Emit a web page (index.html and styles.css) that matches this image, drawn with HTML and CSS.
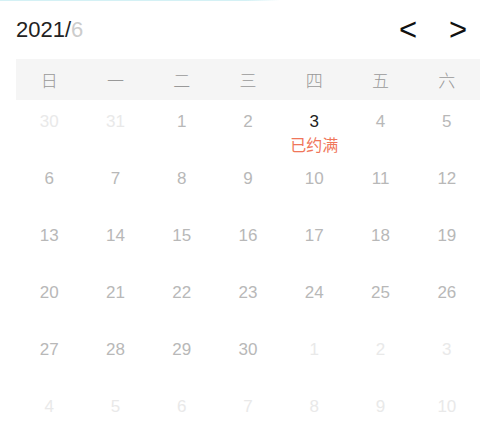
FILE: index.html
```html
<!DOCTYPE html>
<html lang="zh">
<head>
<meta charset="utf-8">
<link rel="stylesheet" href="styles.css">
</head>
<body>
<div class="topline"></div>
<div class="cal">
  <div class="head">
    <div class="title">2021/<span class="month">6</span></div>
    <div class="nav"><span class="arrow">&lt;</span><span class="arrow">&gt;</span></div>
  </div>
  <div class="week">
    <span>日</span><span>一</span><span>二</span><span>三</span><span>四</span><span>五</span><span>六</span>
  </div>
  <div class="days">
    <div class="day other"><span class="num">30</span></div>
    <div class="day other"><span class="num">31</span></div>
    <div class="day"><span class="num">1</span></div>
    <div class="day"><span class="num">2</span></div>
    <div class="day sel"><span class="num">3</span><span class="tag">已约满</span></div>
    <div class="day"><span class="num">4</span></div>
    <div class="day"><span class="num">5</span></div>
    <div class="day"><span class="num">6</span></div>
    <div class="day"><span class="num">7</span></div>
    <div class="day"><span class="num">8</span></div>
    <div class="day"><span class="num">9</span></div>
    <div class="day"><span class="num">10</span></div>
    <div class="day"><span class="num">11</span></div>
    <div class="day"><span class="num">12</span></div>
    <div class="day"><span class="num">13</span></div>
    <div class="day"><span class="num">14</span></div>
    <div class="day"><span class="num">15</span></div>
    <div class="day"><span class="num">16</span></div>
    <div class="day"><span class="num">17</span></div>
    <div class="day"><span class="num">18</span></div>
    <div class="day"><span class="num">19</span></div>
    <div class="day"><span class="num">20</span></div>
    <div class="day"><span class="num">21</span></div>
    <div class="day"><span class="num">22</span></div>
    <div class="day"><span class="num">23</span></div>
    <div class="day"><span class="num">24</span></div>
    <div class="day"><span class="num">25</span></div>
    <div class="day"><span class="num">26</span></div>
    <div class="day"><span class="num">27</span></div>
    <div class="day"><span class="num">28</span></div>
    <div class="day"><span class="num">29</span></div>
    <div class="day"><span class="num">30</span></div>
    <div class="day other"><span class="num">1</span></div>
    <div class="day other"><span class="num">2</span></div>
    <div class="day other"><span class="num">3</span></div>
    <div class="day other"><span class="num">4</span></div>
    <div class="day other"><span class="num">5</span></div>
    <div class="day other"><span class="num">6</span></div>
    <div class="day other"><span class="num">7</span></div>
    <div class="day other"><span class="num">8</span></div>
    <div class="day other"><span class="num">9</span></div>
    <div class="day other"><span class="num">10</span></div>
  </div>
</div>
</body>
</html>
```
FILE: styles.css
```css
html, body {
  margin: 0;
  padding: 0;
  background: #fff;
}
body {
  font-family: "Liberation Sans", "Noto Sans CJK SC", sans-serif;
  overflow: hidden;
}
.topline {
  height: 1px;
  width: 280px;
  background: linear-gradient(to right, #d4f1f5 0%, #d4f1f5 88%, rgba(212,241,245,0) 100%);
}
.cal {
  padding: 0 5px 0 16px;
}
.head {
  height: 58px;
  display: flex;
  align-items: center;
  justify-content: space-between;
}
.title {
  font-size: 22px;
  line-height: 22px;
  color: #222;
}
.month {
  color: #ccc;
}
.nav {
  display: flex;
  gap: 32px;
  padding-right: 13px;
}
.arrow {
  font-size: 31px;
  line-height: 30px;
  color: #111;
  width: 18px;
  text-align: center;
}
.week {
  display: grid;
  grid-template-columns: repeat(7, 1fr);
  height: 41px;
  align-items: center;
  background: #f5f5f5;
  font-family: "Noto Sans CJK SC", sans-serif;
  font-size: 17px;
  font-weight: 300;
  color: #999;
  text-align: center;
}
.days {
  display: grid;
  grid-template-columns: repeat(7, 1fr);
  grid-auto-rows: 57px;
}
.day {
  display: flex;
  flex-direction: column;
  align-items: center;
  padding-top: 11px;
  color: #b8b8b8;
}
.num {
  font-size: 17px;
  line-height: 22px;
}
.other {
  color: #e9e9e9;
}
.sel {
  color: #222;
}
.tag {
  font-family: "Noto Sans CJK SC", sans-serif;
  font-size: 16px;
  line-height: 20px;
  margin-top: 1px;
  color: #f0765a;
}
```
